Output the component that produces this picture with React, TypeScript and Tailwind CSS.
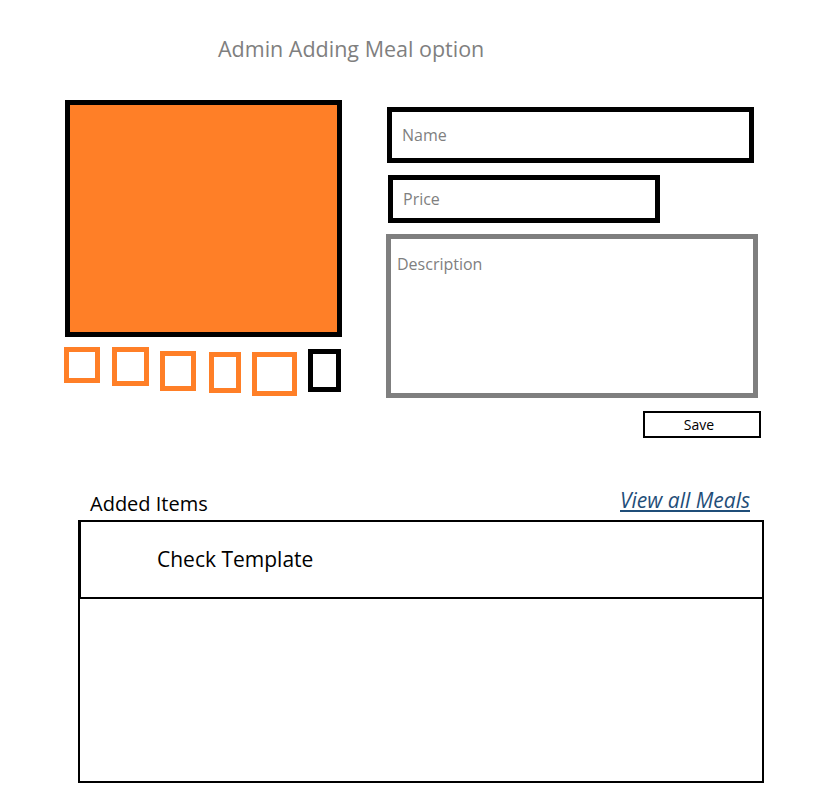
export default function App() {
  const thumbs = [
    { w: 'w-[36px]', h: 'h-[36px]', mt: 'mt-0', ml: 'ml-0', border: 'border-[#ff7f27]' },
    { w: 'w-[37px]', h: 'h-[39px]', mt: 'mt-0', ml: 'ml-[12px]', border: 'border-[#ff7f27]' },
    { w: 'w-[36px]', h: 'h-[40px]', mt: 'mt-[4px]', ml: 'ml-[11px]', border: 'border-[#ff7f27]' },
    { w: 'w-[32px]', h: 'h-[41px]', mt: 'mt-[5px]', ml: 'ml-[13px]', border: 'border-[#ff7f27]' },
    { w: 'w-[45px]', h: 'h-[44px]', mt: 'mt-[5px]', ml: 'ml-[11px]', border: 'border-[#ff7f27]' },
    { w: 'w-[33px]', h: 'h-[43px]', mt: 'mt-[2px]', ml: 'ml-[11px]', border: 'border-black' },
  ];

  return (
    <div
      className="w-[819px] h-[800px] bg-white flex flex-col"
      style={{ fontFamily: '"Open Sans", Lato, sans-serif' }}
    >
      {/* title */}
      <div className="mt-[35px] ml-[218px] text-[21.5px] leading-[28px] text-[#7f7f7f]">
        Admin Adding Meal option
      </div>

      {/* image + form */}
      <div className="mt-[37px] flex items-start gap-[44px] ml-[64px]">
        <div className="w-[278px] flex flex-col">
          <div className="ml-px w-[277px] h-[237px] border-[5px] border-black bg-[#ff7f27]" />
          <div className="mt-[10px] flex items-start">
            {thumbs.map((t, i) => (
              <div key={i} className={`${t.w} ${t.h} ${t.mt} ${t.ml} border-[5px] ${t.border}`} />
            ))}
          </div>
        </div>

        <div className="mt-[7px] flex flex-col items-start">
          <div className="ml-px w-[367px] h-[56px] border-[5px] border-black flex items-center pl-[10px] text-[16px] text-[#7f7f7f]">
            Name
          </div>
          <div className="mt-[12px] ml-[2px] w-[272px] h-[48px] border-[5px] border-black flex items-center pl-[10px] text-[16px] text-[#7f7f7f]">
            Price
          </div>
          <div className="mt-[11px] w-[372px] h-[164px] border-[5px] border-[#7f7f7f] pl-[6px] pt-[16px] text-[16px] leading-[19px] text-[#7f7f7f]">
            Description
          </div>
          <button className="mt-[13px] ml-[257px] w-[118px] h-[27px] border-2 border-black text-[14px] text-black flex items-center justify-center pr-[6px]">
            Save
          </button>
        </div>
      </div>

      {/* added items */}
      <div className="mt-[52px] ml-[90px] w-[660px] flex items-start justify-between">
        <div className="text-[20px] leading-[28px] text-black">Added Items</div>
        <a href="#" className="-mt-[4px] text-[21px] leading-[28px] italic underline text-[#1f4e79]">
          View all Meals
        </a>
      </div>

      <div className="mt-[2px] ml-[78px] w-[686px] flex flex-col">
        <div className="h-[79px] border-2 border-l-[3px] border-black pl-[76px] pt-[23px]">
          <div className="text-[21px] leading-[28px] text-black">Check Template</div>
        </div>
        <div className="h-[184px] border-2 border-t-0 border-black" />
      </div>
    </div>
  );
}
